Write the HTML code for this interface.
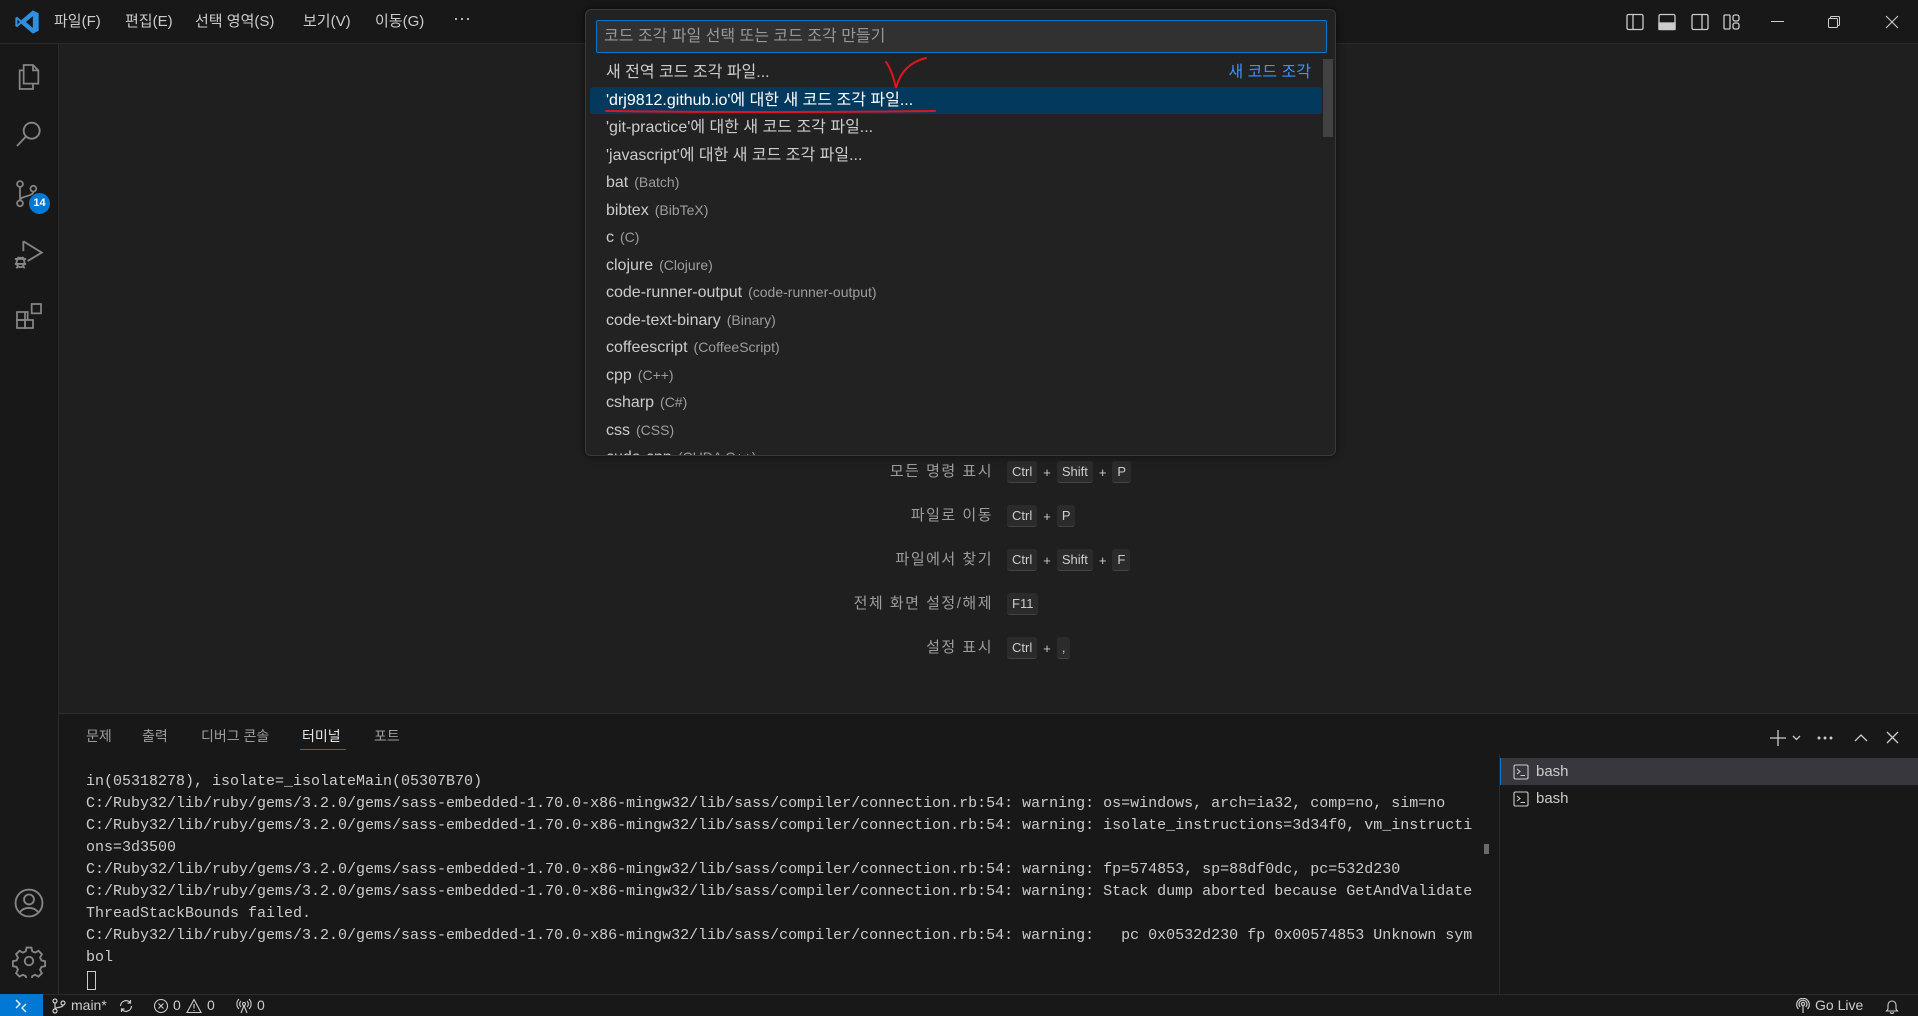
<!DOCTYPE html>
<html><head><meta charset="utf-8"><style>
*{box-sizing:border-box;margin:0;padding:0}
body{width:1918px;height:1016px;overflow:hidden;background:#1f1f1f;font-family:"Liberation Sans","Noto Sans CJK KR",sans-serif;color:#ccc;position:relative}
.abs{position:absolute}
#title{left:0;top:0;width:1918px;height:44px;background:#181818;border-bottom:1px solid #2b2b2b}
.menu{top:0;height:44px;line-height:44px;font-size:15px;color:#ccc}
#act{left:0;top:44px;width:59px;height:950px;background:#181818;border-right:1px solid #2b2b2b}
#qp{left:585px;top:9px;width:751px;height:447px;background:#222222;border:1px solid #3a3a3a;border-radius:6px;overflow:hidden;box-shadow:0 0 8px rgba(0,0,0,.6)}
.inp{left:10px;top:10px;width:731px;height:33px;background:#313131;border:1px solid #0078d4;border-radius:2px;font-size:16px;line-height:31px;padding-left:7px;color:#989898}
.row{left:0;width:736px;height:27px;line-height:27px;font-size:16px;padding-left:20px;color:#ccc;white-space:nowrap}
.row span{color:#9d9d9d;font-size:14px;margin-left:6px}
.sel{background:#04395e;color:#fff}
.sc{font-size:15px;color:#9d9d9d}
.lab{right:925px;text-align:right;letter-spacing:1.5px}
.k{display:inline-block;background:#2b2b2b;border-bottom:1px solid #444;border-radius:3px;padding:0 5px;height:22px;line-height:22px;font-size:13px;color:#ccc;vertical-align:middle}
.plus{display:inline-block;margin:0 6px;font-size:13px;color:#ccc;vertical-align:middle}
#panel{left:59px;top:713px;width:1859px;height:281px;background:#181818;border-top:1px solid #2b2b2b}
.tab{top:12px;font-size:14px;color:#9d9d9d}
.term{left:27px;top:57px;font-family:"Liberation Mono",monospace;font-size:15px;line-height:22px;color:#ccc;white-space:pre}
#status{left:0;top:994px;width:1918px;height:22px;background:#181818;border-top:1px solid #2b2b2b;font-size:14px;color:#ccc;line-height:21px}
svg{position:absolute}
</style></head><body>
<div id="title" class="abs"></div>
<svg style="left:13px;top:8px" width="28" height="28" viewBox="0 0 24 24"><path d="M17 2 L22 4.5 V19.5 L17 22 L7 13.5 L3.5 16.5 L2 15.5 V8.5 L3.5 7.5 L7 10.5 Z M17 7 L11 12 L17 17 Z M3.8 10 V14 L6 12 Z" fill="#2f8fe0"/></svg>
<div class="abs menu" style="left:54px">파일(F)</div>
<div class="abs menu" style="left:125px">편집(E)</div>
<div class="abs menu" style="left:195px">선택 영역(S)</div>
<div class="abs menu" style="left:303px">보기(V)</div>
<div class="abs menu" style="left:375px">이동(G)</div>
<div class="abs menu" style="left:453px;font-size:18px;top:-4px">···</div>
<svg style="left:1625px;top:12px" width="20" height="20" viewBox="0 0 20 20" fill="none" stroke="#ccc" stroke-width="1.3"><rect x="2" y="2.5" width="16" height="15" rx="1.5"/><line x1="8" y1="2.5" x2="8" y2="17.5"/></svg>
<svg style="left:1657px;top:12px" width="20" height="20" viewBox="0 0 20 20" fill="none" stroke="#ccc" stroke-width="1.3"><rect x="2" y="2.5" width="16" height="15" rx="1.5"/><rect x="2" y="11" width="16" height="6.5" fill="#ccc"/></svg>
<svg style="left:1690px;top:12px" width="20" height="20" viewBox="0 0 20 20" fill="none" stroke="#ccc" stroke-width="1.3"><rect x="2" y="2.5" width="16" height="15" rx="1.5"/><line x1="12" y1="2.5" x2="12" y2="17.5"/></svg>
<svg style="left:1722px;top:12px" width="20" height="20" viewBox="0 0 20 20" fill="none" stroke="#ccc" stroke-width="1.3"><rect x="2" y="3" width="6" height="14" rx="1"/><rect x="11" y="3" width="6" height="6" rx="2"/><rect x="11" y="11" width="6" height="6" rx="2"/></svg>
<div class="abs" style="left:1771px;top:21px;width:13px;height:1px;background:#ccc"></div>
<svg style="left:1826px;top:14px" width="16" height="16" viewBox="0 0 16 16" fill="none" stroke="#ccc" stroke-width="1"><rect x="2.5" y="4.5" width="9" height="9" rx="1"/><path d="M4.5 4.5V3.5a1 1 0 0 1 1-1h7a1 1 0 0 1 1 1v7a1 1 0 0 1-1 1h-1"/></svg>
<svg style="left:1884px;top:14px" width="16" height="16" viewBox="0 0 16 16" stroke="#ccc" stroke-width="1.1"><path d="M2 2L14 14M14 2L2 14"/></svg>

<div id="act" class="abs"></div>
<svg style="left:13px;top:61px" width="32" height="32" viewBox="0 0 24 24" fill="none" stroke="#868686" stroke-width="1.3"><path d="M8 3h7l4 4v10H8z"/><path d="M15 3v4h4"/><path d="M8 7H5v14h10v-4"/></svg>
<svg style="left:13px;top:118px" width="32" height="32" viewBox="0 0 24 24" fill="none" stroke="#868686" stroke-width="1.4"><circle cx="14" cy="9.5" r="6"/><path d="M9.8 13.8L3 21"/></svg>
<svg style="left:12px;top:178px" width="32" height="32" viewBox="0 0 24 24" fill="none" stroke="#868686" stroke-width="1.3"><circle cx="6" cy="4.5" r="2.2"/><circle cx="6" cy="19" r="2.2"/><circle cx="16" cy="8" r="2.2"/><path d="M6 6.7V16.8M16 10.2c0 4-10 3-10 6.5"/></svg>
<div class="abs" style="left:29px;top:193px;width:21px;height:21px;border-radius:50%;background:#0078d4;color:#fff;font-size:11px;font-weight:bold;text-align:center;line-height:21px">14</div>
<svg style="left:12px;top:237px" width="34" height="34" viewBox="0 0 24 24" fill="none" stroke="#868686" stroke-width="1.3"><path d="M8 3L21 11L11 17"/><path d="M8 3v7"/><ellipse cx="6" cy="18" rx="2.8" ry="3.3"/><path d="M2 15.5h8M2 19h8M3 22l1.5-1.5M9 22l-1.5-1.5M4 14l1 1.5M8 14l-1 1.5"/></svg>
<svg style="left:13px;top:300px" width="32" height="32" viewBox="0 0 24 24" fill="none" stroke="#868686" stroke-width="1.3"><rect x="3" y="9" width="6" height="6"/><rect x="3" y="15" width="6" height="6"/><rect x="9" y="15" width="6" height="6"/><rect x="14" y="3" width="7" height="7"/><path d="M9 9h2v6"/></svg>
<svg style="left:12px;top:886px" width="34" height="34" viewBox="0 0 24 24" fill="none" stroke="#868686" stroke-width="1.3"><circle cx="12" cy="12" r="9.5"/><circle cx="12" cy="9.5" r="3.5"/><path d="M5.5 18.5c3-4 10-4 13 0"/></svg>
<svg style="left:12px;top:944px" width="34" height="34" viewBox="0 0 24 24" fill="none" stroke="#868686" stroke-width="1.3"><path d="M10.3 2.5h3.4l.6 2.6 2 1 2.4-1.3 2.4 2.4-1.3 2.4 1 2 2.6.6v3.4l-2.6.6-1 2 1.3 2.4-2.4 2.4-2.4-1.3-2 1-.6 2.6h-3.4l-.6-2.6-2-1-2.4 1.3-2.4-2.4 1.3-2.4-1-2-2.6-.6v-3.4l2.6-.6 1-2-1.3-2.4 2.4-2.4 2.4 1.3 2-1z"/><circle cx="12" cy="12" r="3"/></svg>

<div class="abs sc lab" style="top:461px;height:22px;line-height:22px">모든 명령 표시</div>
<div class="abs" style="left:1007px;top:461px"><span class="k">Ctrl</span><span class="plus">+</span><span class="k">Shift</span><span class="plus">+</span><span class="k">P</span></div>
<div class="abs sc lab" style="top:505px;height:22px;line-height:22px">파일로 이동</div>
<div class="abs" style="left:1007px;top:505px"><span class="k">Ctrl</span><span class="plus">+</span><span class="k">P</span></div>
<div class="abs sc lab" style="top:549px;height:22px;line-height:22px">파일에서 찾기</div>
<div class="abs" style="left:1007px;top:549px"><span class="k">Ctrl</span><span class="plus">+</span><span class="k">Shift</span><span class="plus">+</span><span class="k">F</span></div>
<div class="abs sc lab" style="top:593px;height:22px;line-height:22px">전체 화면 설정/해제</div>
<div class="abs" style="left:1007px;top:593px"><span class="k">F11</span></div>
<div class="abs sc lab" style="top:637px;height:22px;line-height:22px">설정 표시</div>
<div class="abs" style="left:1007px;top:637px"><span class="k">Ctrl</span><span class="plus">+</span><span class="k">,</span></div>

<div id="qp" class="abs">
<div class="abs inp">코드 조각 파일 선택 또는 코드 조각 만들기</div>
<div class="abs row" style="top:49px">새 전역 코드 조각 파일...</div>
<div class="abs" style="right:24px;top:49px;line-height:27px;font-size:16px;color:#3794ff">새 코드 조각</div>
<div class="abs row sel" style="top:77px;left:4px;width:732px;padding-left:16px;border-radius:3px">'drj9812.github.io'에 대한 새 코드 조각 파일...</div>
<div class="abs row" style="top:104px">'git-practice'에 대한 새 코드 조각 파일...</div>
<div class="abs row" style="top:132px">'javascript'에 대한 새 코드 조각 파일...</div>
<div class="abs row" style="top:159px">bat<span>(Batch)</span></div>
<div class="abs row" style="top:187px">bibtex<span>(BibTeX)</span></div>
<div class="abs row" style="top:214px">c<span>(C)</span></div>
<div class="abs row" style="top:242px">clojure<span>(Clojure)</span></div>
<div class="abs row" style="top:269px">code-runner-output<span>(code-runner-output)</span></div>
<div class="abs row" style="top:297px">code-text-binary<span>(Binary)</span></div>
<div class="abs row" style="top:324px">coffeescript<span>(CoffeeScript)</span></div>
<div class="abs row" style="top:352px">cpp<span>(C++)</span></div>
<div class="abs row" style="top:379px">csharp<span>(C#)</span></div>
<div class="abs row" style="top:407px">css<span>(CSS)</span></div>
<div class="abs row" style="top:434px">cuda-cpp<span>(CUDA C++)</span></div>
<div class="abs" style="right:2px;top:49px;width:10px;height:78px;background:#424242"></div>
</div>
<svg style="left:590px;top:50px" width="360" height="70" viewBox="0 0 360 70" fill="none" stroke="#e0141e" stroke-width="2" stroke-linecap="round"><path d="M296 12 Q302 20 306 38 Q312 14 336 8"/><path d="M16 61 Q180 63 345 61"/></svg>

<div id="panel" class="abs">
<div class="abs tab" style="left:27px">문제</div>
<div class="abs tab" style="left:83px">출력</div>
<div class="abs tab" style="left:142px">디버그 콘솔</div>
<div class="abs tab" style="left:243px;color:#e7e7e7">터미널</div>
<div class="abs" style="left:241px;top:35px;width:46px;height:1px;background:#0078d4"></div>
<div class="abs tab" style="left:315px">포트</div>
<div class="term abs">in(05318278), isolate=_isolateMain(05307B70)
C:/Ruby32/lib/ruby/gems/3.2.0/gems/sass-embedded-1.70.0-x86-mingw32/lib/sass/compiler/connection.rb:54: warning: os=windows, arch=ia32, comp=no, sim=no
C:/Ruby32/lib/ruby/gems/3.2.0/gems/sass-embedded-1.70.0-x86-mingw32/lib/sass/compiler/connection.rb:54: warning: isolate_instructions=3d34f0, vm_instructi
ons=3d3500
C:/Ruby32/lib/ruby/gems/3.2.0/gems/sass-embedded-1.70.0-x86-mingw32/lib/sass/compiler/connection.rb:54: warning: fp=574853, sp=88df0dc, pc=532d230
C:/Ruby32/lib/ruby/gems/3.2.0/gems/sass-embedded-1.70.0-x86-mingw32/lib/sass/compiler/connection.rb:54: warning: Stack dump aborted because GetAndValidate
ThreadStackBounds failed.
C:/Ruby32/lib/ruby/gems/3.2.0/gems/sass-embedded-1.70.0-x86-mingw32/lib/sass/compiler/connection.rb:54: warning:   pc 0x0532d230 fp 0x00574853 Unknown sym
bol</div>
<div class="abs" style="left:28px;top:257px;width:9px;height:19px;border:1px solid #ccc"></div>
<div class="abs" style="left:1425px;top:130px;width:5px;height:10px;background:#6a6a6a"></div>
<div class="abs" style="left:1440px;top:40px;width:1px;height:241px;background:#2b2b2b"></div>
<div class="abs" style="left:1441px;top:44px;width:418px;height:27px;background:#37373d;border-left:1px solid #0078d4"></div>
<svg style="left:1454px;top:50px" width="16" height="16" viewBox="0 0 16 16" fill="none" stroke="#ccc" stroke-width="1.1"><rect x="1" y="1" width="14" height="14" rx="1.5"/><path d="M4 5l3 2.5-3 2.5M7.5 11.5H12"/></svg>
<div class="abs" style="left:1477px;top:44px;line-height:27px;font-size:15px;color:#ccc">bash</div>
<svg style="left:1454px;top:77px" width="16" height="16" viewBox="0 0 16 16" fill="none" stroke="#ccc" stroke-width="1.1"><rect x="1" y="1" width="14" height="14" rx="1.5"/><path d="M4 5l3 2.5-3 2.5M7.5 11.5H12"/></svg>
<div class="abs" style="left:1477px;top:71px;line-height:27px;font-size:15px;color:#ccc">bash</div>
<svg style="left:1710px;top:14px" width="190" height="20" viewBox="0 0 190 20" fill="none" stroke="#ccc" stroke-width="1.3"><path d="M9 2v16M1 10h16"/><path d="M24 8l3.5 3.5L31 8"/><circle cx="50" cy="10" r=".8" fill="#ccc"/><circle cx="56" cy="10" r=".8" fill="#ccc"/><circle cx="62" cy="10" r=".8" fill="#ccc"/><path d="M86 13l6-6 6 6"/><path d="M118 4l11 11M129 4l-11 11"/></svg>
</div>

<div id="status" class="abs">
<div class="abs" style="left:0;top:-1px;width:43px;height:22px;background:#0078d4"></div>
<svg style="left:13px;top:3px" width="16" height="16" viewBox="0 0 16 16" fill="none" stroke="#fff" stroke-width="1.3"><path d="M3 2l4 4-4 4M13 6l-4 4 4 4"/></svg>
<svg style="left:52px;top:3px" width="14" height="16" viewBox="0 0 14 16" fill="none" stroke="#ccc" stroke-width="1.2"><circle cx="3" cy="3" r="2"/><circle cx="3" cy="13" r="2"/><circle cx="11" cy="5" r="2"/><path d="M3 5v6M11 7c0 3-8 2-8 4"/></svg>
<div class="abs" style="left:71px;top:0">main*</div>
<svg style="left:118px;top:3px" width="16" height="16" viewBox="0 0 16 16" fill="none" stroke="#ccc" stroke-width="1.2"><path d="M2.5 8a5.5 5.5 0 0 1 10-3M13.5 8a5.5 5.5 0 0 1-10 3M12.5 2v3h-3M3.5 14v-3h3"/></svg>
<svg style="left:153px;top:3px" width="16" height="16" viewBox="0 0 16 16" fill="none" stroke="#ccc" stroke-width="1.1"><circle cx="8" cy="8" r="6.5"/><path d="M5.5 5.5l5 5M10.5 5.5l-5 5"/></svg>
<div class="abs" style="left:173px;top:0">0</div>
<svg style="left:186px;top:3px" width="16" height="16" viewBox="0 0 16 16" fill="none" stroke="#ccc" stroke-width="1.1"><path d="M8 1.5L15 14.5H1z"/><path d="M8 6v4.5M8 12v1"/></svg>
<div class="abs" style="left:207px;top:0">0</div>
<svg style="left:236px;top:3px" width="16" height="16" viewBox="0 0 16 16" fill="none" stroke="#ccc" stroke-width="1.1"><circle cx="8" cy="6" r="1.5"/><path d="M5 3a4 4 0 0 0 0 6M11 3a4 4 0 0 1 0 6M3 1a7 7 0 0 0 0 10M13 1a7 7 0 0 1 0 10M8 7.5L5 15M8 7.5l3 7.5"/></svg>
<div class="abs" style="left:257px;top:0">0</div>
<svg style="left:1795px;top:3px" width="16" height="16" viewBox="0 0 16 16" fill="none" stroke="#ccc" stroke-width="1.2"><circle cx="8" cy="6" r="1.6"/><path d="M5.2 9a4 4 0 1 1 5.6 0M3.5 11a6.3 6.3 0 1 1 9 0M8 8v7"/></svg>
<div class="abs" style="left:1815px;top:0">Go Live</div>
<svg style="left:1884px;top:3px" width="16" height="16" viewBox="0 0 16 16" fill="none" stroke="#ccc" stroke-width="1.1"><path d="M4 11V7a4 4 0 0 1 8 0v4l1.5 2h-11z"/><path d="M6.5 14a1.5 1.5 0 0 0 3 0"/></svg>
</div>
</body></html>
